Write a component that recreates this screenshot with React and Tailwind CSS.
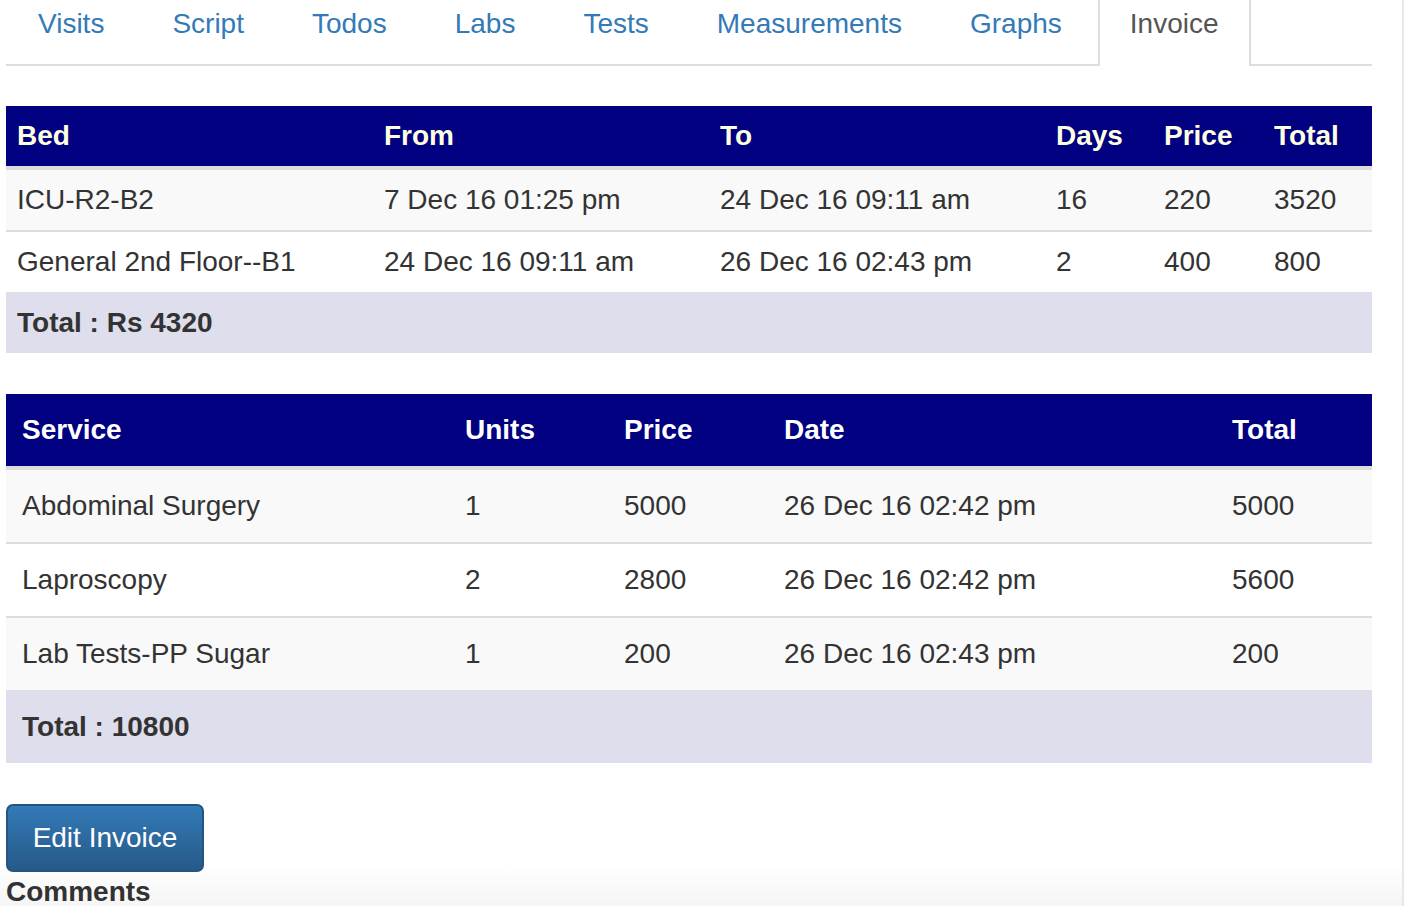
const TABS = ["Visits", "Script", "Todos", "Labs", "Tests", "Measurements", "Graphs", "Invoice"];

const BEDS = [
  ["ICU-R2-B2", "7 Dec 16 01:25 pm", "24 Dec 16 09:11 am", "16", "220", "3520"],
  ["General 2nd Floor--B1", "24 Dec 16 09:11 am", "26 Dec 16 02:43 pm", "2", "400", "800"],
];

const SERVICES = [
  ["Abdominal Surgery", "1", "5000", "26 Dec 16 02:42 pm", "5000"],
  ["Laproscopy", "2", "2800", "26 Dec 16 02:42 pm", "5600"],
  ["Lab Tests-PP Sugar", "1", "200", "26 Dec 16 02:43 pm", "200"],
];

const bedCols = "grid grid-cols-[367px_336px_336px_108px_110px_109px]";
const svcCols = "grid grid-cols-[443px_159px_160px_448px_156px]";

function Tabs() {
  return (
    <div className="-mt-[16px] flex border-b-2 border-[#ddd]">
      {TABS.map((t) => {
        const active = t === "Invoice";
        return (
          <div
            key={t}
            className={
              active
                ? "-mb-[2px] mr-[4px] flex h-[82px] items-center rounded-t-[6px] border-2 border-b-0 border-[#ddd] bg-white px-[30px] pb-[4px] text-[#555]"
                : "mr-[4px] flex h-[80px] items-center px-[32px] text-[#337ab7]"
            }
          >
            {t}
          </div>
        );
      })}
    </div>
  );
}

export default function App() {
  return (
    <div className="relative h-[906px] w-[1404px] overflow-hidden border-r-2 border-[#e8e8e8] bg-white font-['Liberation_Sans',Arial,sans-serif] text-[28px] text-[#333]">
      <div className="w-[1372px] pl-[6px]">
        <Tabs />

        {/* Beds */}
        <div className="mt-[40px]">
          <div className={`${bedCols} h-[64px] items-center border-b-4 border-[#ddd] bg-[#000080] font-bold text-[#ffffe0]`}>
            {["Bed", "From", "To", "Days", "Price", "Total"].map((h) => (
              <div key={h} className="pl-[11px]">{h}</div>
            ))}
          </div>
          {BEDS.map((r, i) => (
            <div
              key={i}
              className={`${bedCols} items-center ${i === 0 ? "h-[60px] bg-[#f9f9f9]" : "h-[62px] border-t-2 border-[#ddd] bg-white"}`}
            >
              {r.map((c, j) => (
                <div key={j} className="pl-[11px]">{c}</div>
              ))}
            </div>
          ))}
          <div className="flex h-[61px] items-center bg-[#dedeed] pl-[11px] font-bold">Total : Rs 4320</div>
        </div>

        {/* Services */}
        <div className="mt-[41px]">
          <div className={`${svcCols} h-[76px] items-center border-b-4 border-[#ddd] bg-[#000080] font-bold text-white`}>
            {["Service", "Units", "Price", "Date", "Total"].map((h) => (
              <div key={h} className="pl-[16px]">{h}</div>
            ))}
          </div>
          {SERVICES.map((r, i) => (
            <div
              key={i}
              className={`${svcCols} items-center ${i === 0 ? "h-[72px]" : "h-[74px] border-t-2 border-[#ddd]"} ${i % 2 === 0 ? "bg-[#f9f9f9]" : "bg-white"}`}
            >
              {r.map((c, j) => (
                <div key={j} className="pl-[16px]">{c}</div>
              ))}
            </div>
          ))}
          <div className="flex h-[73px] items-center bg-[#dedeed] pl-[16px] font-bold">Total : 10800</div>
        </div>

        <button
          type="button"
          className="mt-[41px] flex h-[68px] w-[198px] items-center justify-center rounded-[7px] border-2 border-[#245580] bg-gradient-to-b from-[#337ab7] to-[#265a88] text-white"
        >
          Edit Invoice
        </button>
        <div className="font-bold leading-[40px]">Comments</div>
      </div>

      {/* faint footer shade */}
      <div className="pointer-events-none absolute bottom-0 left-0 h-[44px] w-full bg-gradient-to-b from-black/0 to-black/[0.04]" />
    </div>
  );
}
